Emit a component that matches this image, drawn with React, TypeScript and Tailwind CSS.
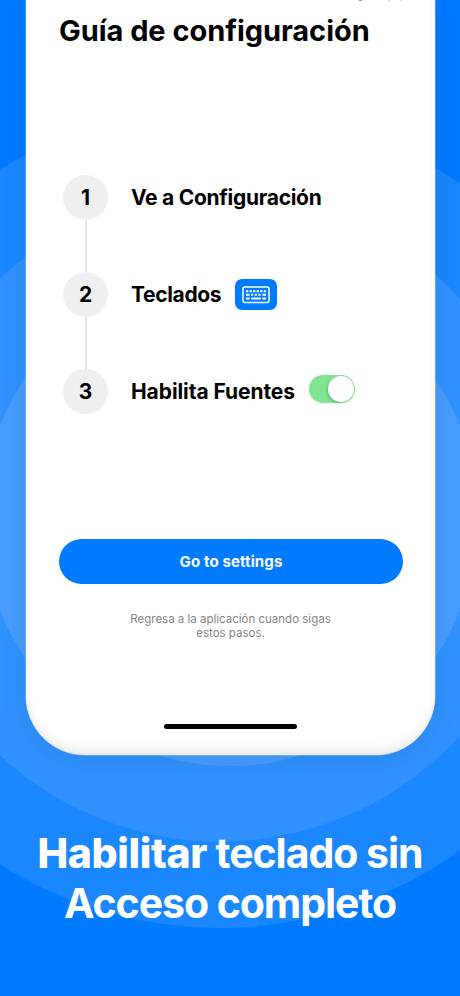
import { ReactNode } from "react";

interface StepProps {
  number: number;
  title: string;
  titleClass: string;
  isLast?: boolean;
  children?: ReactNode;
}

const Rings = () => (
  <svg className="absolute inset-0" width="460" height="996" viewBox="0 0 460 996">
    <circle cx="219.5" cy="517" r="411" fill="#1a87ff" />
    <circle cx="220" cy="517" r="324.5" fill="#3092ff" />
    <circle cx="230" cy="518" r="248" fill="#479dff" />
  </svg>
);

const KeyboardIcon = () => (
  <svg width="28" height="18" viewBox="0 0 28 18" fill="none">
    <rect x="1" y="1" width="26" height="15.4" rx="1.8" stroke="#fff" strokeWidth="1.5" />
    <g stroke="#fff" strokeWidth="2">
      <path d="M4 5.2h20" strokeDasharray="2.3 1.24" />
      <path d="M4 8.8h3.6M9 8.8h2.2M12.7 8.8h2.2M16.4 8.8h2.2M20.4 8.8H24" />
      <path d="M4 12.4h3.6M9.2 12.4h9.6M20.4 12.4H24" />
    </g>
  </svg>
);

const Toggle = () => (
  <div className="ml-[14px] -mt-[5px] flex h-[28px] w-[46px] items-center justify-end rounded-full bg-[#80e491] pr-px">
    <div className="h-[26px] w-[26px] rounded-full bg-white shadow-[-1px_1px_3px_rgba(0,0,0,0.2)]" />
  </div>
);

const Step = ({ number, title, titleClass, isLast, children }: StepProps) => (
  <div className="flex">
    <div className="flex w-[45px] flex-col items-center">
      <div className="flex h-[45px] w-[45px] items-center justify-center rounded-full bg-[#efefef] text-[21px] font-bold">
        {number}
      </div>
      {!isLast && <div className="h-[52px] w-[2px] bg-[#e5e5e5]" />}
    </div>
    <div className="ml-[23px] flex h-[45px] items-center whitespace-nowrap">
      <span className={`text-[21px] font-bold ${titleClass}`}>{title}</span>
      {children}
    </div>
  </div>
);

const App = () => {
  return (
    <div className="relative h-[996px] w-[460px] overflow-hidden bg-[#007aff] font-['Inter',sans-serif]">
      <Rings />

      <div className="relative flex flex-col items-center">
        {/* Phone screen */}
        <div className="ml-px h-[754.5px] w-[409px] rounded-b-[59px] bg-white px-[33px] text-black shadow-[inset_0_-7px_12px_-4px_rgba(0,0,0,0.12),0_6px_30px_rgba(0,0,0,0.09),0_0_0_0.5px_rgba(255,255,255,0.5)]">
          {/* Bottom edge of the status bar */}
          <div className="flex h-px items-start pl-[300px]">
            <span className="h-px w-[3px] bg-[#55a5e8]" />
            <span className="ml-[26px] h-px w-[2px] bg-gray-300" />
            <span className="ml-[10px] h-px w-[2px] bg-gray-300" />
          </div>
          <h1 className="mt-[10px] h-[40px] whitespace-nowrap text-[29px] font-bold leading-[40px] tracking-[-0.05px]">
            Guía de configuración
          </h1>

          <div className="mt-[124px] pl-[4px]">
            <Step number={1} title="Ve a Configuración" titleClass="tracking-[-0.28px]" />
            <Step number={2} title="Teclados" titleClass="tracking-[-0.35px]">
              <div className="ml-[14px] flex h-[31px] w-[42px] items-center justify-center rounded-[7px] bg-[#007aff]">
                <KeyboardIcon />
              </div>
            </Step>
            <Step number={3} title="Habilita Fuentes" titleClass="tracking-[-0.08px]" isLast>
              <Toggle />
            </Step>
          </div>

          <button className="mt-[125px] flex h-[45px] w-[344px] items-center justify-center rounded-full bg-[#007aff] pt-px text-[15px] font-bold tracking-[0.12px] text-white">
            Go to settings
          </button>
          <p className="mt-[27px] pt-px text-center text-[11.5px] leading-[14px] text-[#858585]">
            Regresa a la aplicación cuando sigas
            <br />
            estos pasos.
          </p>
          <div className="mx-auto mt-[84px] h-[5px] w-[133px] rounded-full bg-black" />
        </div>

        <h2 className="mt-[73px] whitespace-nowrap text-center text-[41px] font-bold leading-[50px] tracking-[-1.05px] text-white">
          <span className="font-extrabold tracking-[-0.4px]">Habilitar</span> teclado sin
          <br />
          Acceso completo
        </h2>
      </div>
    </div>
  );
};

export default App;
